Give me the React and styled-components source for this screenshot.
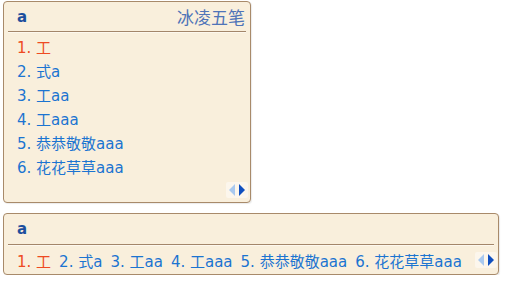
import styled, { createGlobalStyle } from "styled-components";

const GlobalStyle = createGlobalStyle`
  html, body {
    margin: 0;
    padding: 0;
    background: #ffffff;
  }
  body {
    font-family: "DejaVu Sans", "Noto Sans CJK SC", sans-serif;
  }
`;

const Page = styled.div`
  display: flex;
  flex-direction: column;
  align-items: flex-start;
  gap: 10px;
  padding: 1px 0 0 3px;
`;

const Panel = styled.div`
  box-sizing: border-box;
  width: ${(p) => p.$width}px;
  height: ${(p) => p.$height}px;
  background: #f9efdc;
  border: 1px solid #a88a6a;
  border-radius: 4px;
  display: flex;
  flex-direction: column;
  box-shadow: 1px 1px 1px rgba(0, 0, 0, 0.08);
`;

const Header = styled.div`
  height: ${(p) => p.$height}px;
  margin: 0 4px;
  padding: 0 1px 0 9px;
  display: flex;
  align-items: center;
  justify-content: space-between;
  border-bottom: 1px solid #a3866a;
  box-shadow: 0 1px 0 #fdf8ee;
`;

const Code = styled.span`
  font-size: 15px;
  font-weight: bold;
  color: #1d4f9e;
`;

const Engine = styled.span`
  font-family: "Noto Sans CJK SC", sans-serif;
  font-size: 17px;
  color: #4f74b8;
`;

const List = styled.div`
  display: flex;
  flex-direction: ${(p) => (p.$row ? "row" : "column")};
  align-items: ${(p) => (p.$row ? "center" : "flex-start")};
  padding: ${(p) => (p.$row ? "5px 0 0 13px" : "4px 0 0 13px")};
  gap: ${(p) => (p.$row ? "8px" : "0")};
`;

const Candidate = styled.div`
  height: 24px;
  line-height: 24px;
  font-size: 15px;
  white-space: nowrap;
  color: ${(p) => (p.$active ? "#ee4a22" : "#1b74d1")};
`;

const Pager = styled.div`
  display: flex;
  align-items: center;
  gap: 4px;
  padding: 2px 3px;
  background: rgba(255, 255, 255, 0.45);
  border-radius: 2px;
`;

const Footer = styled.div`
  display: flex;
  justify-content: flex-end;
  padding: 1px 2px 0 0;
  margin-top: 1px;
`;

const RowLine = styled.div`
  display: flex;
  align-items: center;
  justify-content: space-between;
  padding-right: 1px;
`;

const Arrows = () => (
  <Pager>
    <svg width="6" height="12" viewBox="0 0 6 12">
      <path d="M6 0 L0 6 L6 12 Z" fill="#a9c9ef" />
    </svg>
    <svg width="6" height="12" viewBox="0 0 6 12">
      <path d="M0 0 L6 6 L0 12 Z" fill="#0f4fbf" />
    </svg>
  </Pager>
);

const words = ["工", "式a", "工aa", "工aaa", "恭恭敬敬aaa", "花花草草aaa"];

export default function App() {
  return (
    <>
      <GlobalStyle />
      <Page>
        <Panel $width={248} $height={202}>
          <Header $height={29}>
            <Code>a</Code>
            <Engine>冰凌五笔</Engine>
          </Header>
          <List>
            {words.map((w, i) => (
              <Candidate key={i} $active={i === 0}>
                {i + 1}. {w}
              </Candidate>
            ))}
          </List>
          <Footer>
            <Arrows />
          </Footer>
        </Panel>
        <Panel $width={496} $height={62}>
          <Header $height={30}>
            <Code>a</Code>
          </Header>
          <RowLine>
            <List $row>
              {words.map((w, i) => (
                <Candidate key={i} $active={i === 0}>
                  {i + 1}. {w}
                </Candidate>
              ))}
            </List>
            <Arrows />
          </RowLine>
        </Panel>
      </Page>
    </>
  );
}
